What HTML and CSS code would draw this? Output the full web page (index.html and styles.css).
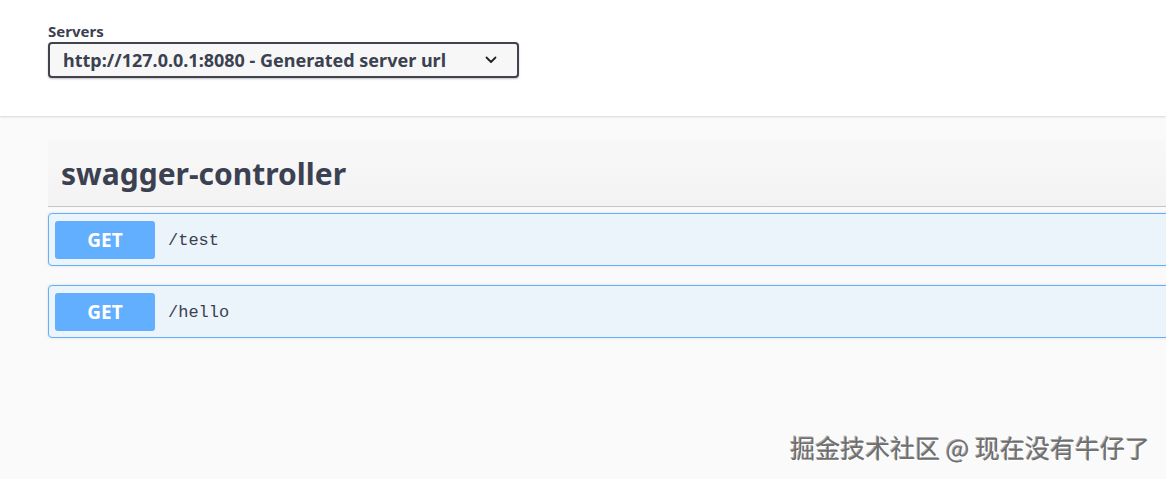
FILE: index.html
```html
<!DOCTYPE html>
<html>
<head>
    <title>Swagger UI</title>
    <link rel="stylesheet" href="styles.css">
</head>
<body>
    <div class="scheme-container">
        <div class="servers">
            <span class="servers-title">Servers</span>
            <div class="server-select">
                <span>http://127.0.0.1:8080 - Generated server url</span>
                <svg class="arrow" width="12" height="8" viewBox="0 0 12 8">
                    <path d="M1.5 1.5 L6 6 L10.5 1.5" fill="none" stroke="#222" stroke-width="1.8" stroke-linecap="round" stroke-linejoin="round"/>
                </svg>
            </div>
        </div>
    </div>

    <div class="wrapper">
        <div class="tag-section">
            <h3 class="opblock-tag">swagger-controller</h3>
            <div class="opblock">
                <span class="method">GET</span>
                <span class="path">/test</span>
            </div>
            <div class="opblock">
                <span class="method">GET</span>
                <span class="path">/hello</span>
            </div>
        </div>
    </div>

    <div class="watermark">掘金技术社区 @ 现在没有牛仔了</div>
</body>
</html>
```

FILE: styles.css
```css
html, body {
    margin: 0;
    height: 100%;
}
body {
    font-family: "Noto Sans", "Open Sans", sans-serif;
    background-color: #fafafa;
    color: #3b4151;
    overflow: hidden;
    position: relative;
}
.scheme-container {
    height: 116px;
    background-color: #fff;
    box-shadow: 0 1px 2px rgba(0, 0, 0, 0.15);
    padding: 21px 0 0 48px;
    box-sizing: border-box;
}
.servers {
    display: flex;
    flex-direction: column;
    gap: 1px;
}
.servers-title {
    font-size: 15px;
    font-weight: 700;
    line-height: 20px;
}
.server-select {
    width: 471px;
    height: 36px;
    box-sizing: border-box;
    display: flex;
    align-items: center;
    justify-content: space-between;
    padding: 0 20px 0 13px;
    border: 2px solid #41444e;
    border-radius: 4px;
    background-color: #f7f7f7;
    box-shadow: 0 1px 2px rgba(0, 0, 0, 0.25);
    font-size: 18px;
    font-weight: 700;
    color: #3b4151;
}
.wrapper {
    padding: 24px 0 0 48px;
}
.tag-section {
    width: 1160px;
}
.opblock-tag {
    margin: 0 0 6px;
    height: 67px;
    box-sizing: border-box;
    padding: 0 13px;
    display: flex;
    align-items: center;
    font-size: 30px;
    font-weight: 700;
    background: linear-gradient(#f8f8f8, #f3f3f3);
    border-bottom: 1px solid #c4c6ca;
}
.opblock {
    height: 53px;
    box-sizing: border-box;
    margin-bottom: 19px;
    padding: 0 6px;
    display: flex;
    align-items: center;
    gap: 13px;
    border: 1px solid #61affe;
    border-radius: 4px;
    background-color: #ebf3fb;
    box-shadow: 0 0 3px rgba(0, 0, 0, 0.12);
}
.method {
    width: 100px;
    height: 38px;
    display: flex;
    align-items: center;
    justify-content: center;
    border-radius: 3px;
    background-color: #61affe;
    color: #fff;
    font-size: 19px;
    font-weight: 700;
}
.path {
    font-family: "Liberation Mono", monospace;
    font-size: 17px;
    padding-top: 2px;
    color: #3b4151;
}
.watermark {
    position: absolute;
    right: 16px;
    bottom: 14px;
    font-family: "Noto Sans CJK SC", sans-serif;
    font-size: 25px;
    color: #6e6e6e;
    text-shadow: 1px 1px 0 #fff, -1px -1px 0 #aaa;
}
```
